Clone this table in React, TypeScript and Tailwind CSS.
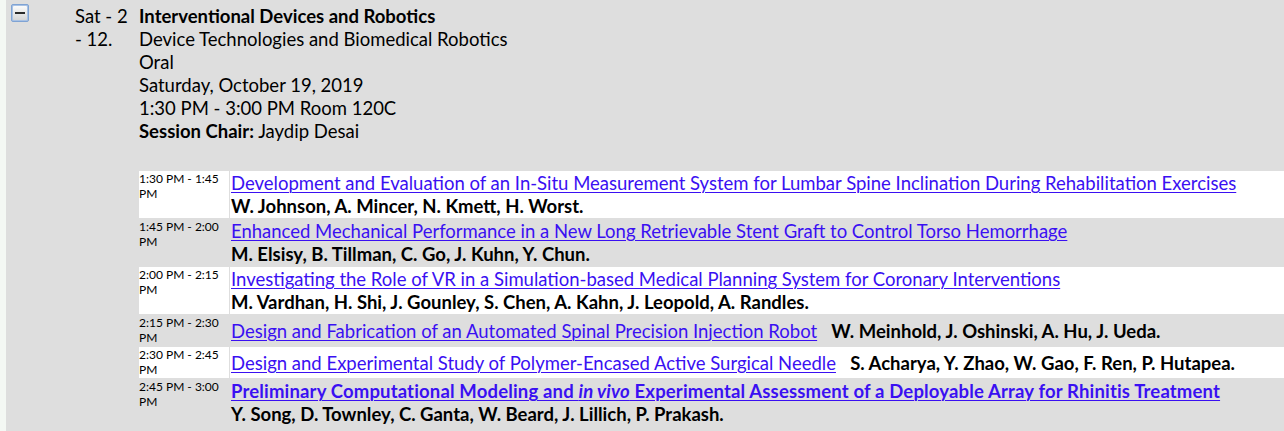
// Session detail block - program listing with talk rows

type Talk = {
  time: string;
  title: React.ReactNode;
  authors: string;
  bold?: boolean;
};

const talks: Talk[] = [
  {
    time: '1:30 PM - 1:45 PM',
    title: 'Development and Evaluation of an In-Situ Measurement System for Lumbar Spine Inclination During Rehabilitation Exercises',
    authors: 'W. Johnson, A. Mincer, N. Kmett, H. Worst.',
  },
  {
    time: '1:45 PM - 2:00 PM',
    title: 'Enhanced Mechanical Performance in a New Long Retrievable Stent Graft to Control Torso Hemorrhage',
    authors: 'M. Elsisy, B. Tillman, C. Go, J. Kuhn, Y. Chun.',
  },
  {
    time: '2:00 PM - 2:15 PM',
    title: 'Investigating the Role of VR in a Simulation-based Medical Planning System for Coronary Interventions',
    authors: 'M. Vardhan, H. Shi, J. Gounley, S. Chen, A. Kahn, J. Leopold, A. Randles.',
  },
  {
    time: '2:15 PM - 2:30 PM',
    title: 'Design and Fabrication of an Automated Spinal Precision Injection Robot',
    authors: 'W. Meinhold, J. Oshinski, A. Hu, J. Ueda.',
  },
  {
    time: '2:30 PM - 2:45 PM',
    title: 'Design and Experimental Study of Polymer-Encased Active Surgical Needle',
    authors: 'S. Acharya, Y. Zhao, W. Gao, F. Ren, P. Hutapea.',
  },
  {
    time: '2:45 PM - 3:00 PM',
    title: (
      <>
        Preliminary Computational Modeling and <i>in vivo</i> Experimental Assessment of a Deployable Array for Rhinitis Treatment
      </>
    ),
    authors: 'Y. Song, D. Townley, C. Ganta, W. Beard, J. Lillich, P. Prakash.',
    bold: true,
  },
];

function CollapseIcon() {
  return (
    <div className="w-[18px] h-[18px] rounded-[2px] border border-[#7fa3d4] bg-[#a9c2e4] p-[1px]">
      <div className="w-full h-full rounded-[1px] bg-gradient-to-b from-[#fbfbfb] to-[#d6d6d6] flex items-center justify-center">
        <div className="w-[10px] h-[2px] bg-[#2a2a2a]" />
      </div>
    </div>
  );
}

export default function App() {
  return (
    <div className="flex min-h-[431px] bg-[#f4f8f4] text-black font-['Lato',sans-serif]">
      <div className="w-[6px] shrink-0" />
      <div className="flex flex-1 bg-[#dedede] pb-[5px]">
        {/* 접기 아이콘 */}
        <div className="w-[69px] shrink-0 pl-[5px] pt-[4px]">
          <CollapseIcon />
        </div>

        {/* 세션 번호 */}
        <div className="w-[64px] shrink-0 pt-[5px] text-[18.5px] leading-[23px]">
          <div>Sat - 2</div>
          <div>- 12.</div>
        </div>

        <div className="flex-1 min-w-0 pt-[5px]">
          <div className="text-[18.5px] leading-[23px]">
            <div className="font-bold">Interventional Devices and Robotics</div>
            <div>Device Technologies and Biomedical Robotics</div>
            <div>Oral</div>
            <div>Saturday, October 19, 2019</div>
            <div>1:30 PM - 3:00 PM Room 120C</div>
            <div>
              <span className="font-bold">Session Chair:</span> Jaydip Desai
            </div>
          </div>

          {/* 발표 목록 */}
          <div className="mt-[28px] flex flex-col gap-[1px]">
            {talks.map((t, i) => {
              const bg = i % 2 === 0 ? 'bg-white' : 'bg-[#dedede]';
              return (
                <div key={t.time} className="flex gap-[1px]">
                  <div className={`w-[90px] shrink-0 pb-[1px] text-[12px] leading-[15px] ${bg}`}>
                    {t.time}
                  </div>
                  <div className={`flex-1 flex items-center pl-[1px] pt-[1px] text-[18.5px] leading-[23px] ${bg}`}>
                    <div>
                      <a
                        href="#"
                        className={`text-[#3a10f2] underline decoration-1 underline-offset-[2px] ${t.bold ? 'font-bold tracking-[0.16px]' : ''}`}
                      >
                        {t.title}
                      </a>
                      {'\u00a0\u00a0 '}
                      <span className="inline-block font-bold">{t.authors}</span>
                    </div>
                  </div>
                </div>
              );
            })}
          </div>
        </div>
      </div>
    </div>
  );
}
